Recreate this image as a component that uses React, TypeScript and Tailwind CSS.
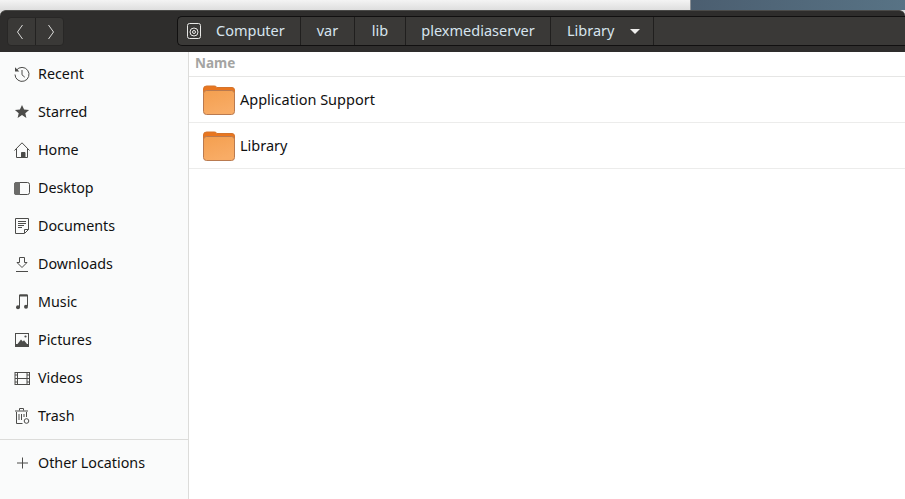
import type { ReactNode } from 'react';

const sans = 'font-["Noto_Sans",sans-serif]';

function Icon({ children }: { children: ReactNode }) {
  return (
    <svg width="16" height="16" viewBox="0 0 16 16" fill="none" stroke="#4c4c4a" strokeWidth="1" className="shrink-0">
      {children}
    </svg>
  );
}

const places: { label: string; icon: ReactNode }[] = [
  {
    label: 'Recent',
    icon: (
      <>
        <path d="M2.4 4.2A7 7 0 1 1 1 8.5" />
        <path d="M1 1.2v4.3h4.3z" fill="#4c4c4a" stroke="none" />
        <path d="M8 4v4.8l2.8 2.4" />
      </>
    ),
  },
  {
    label: 'Starred',
    icon: <path d="M8 1l2.1 4.5 5 .5-3.8 3.2 1.1 4.9L8 11.1l-4.4 3 1.1-4.9L.9 6l5-.5z" fill="#4c4c4a" stroke="none" />,
  },
  {
    label: 'Home',
    icon: (
      <>
        <path d="M.5 8.5L8 .8l7.5 7.7" />
        <path d="M2.5 7v8.5h11V7" />
        <path d="M7.5 15.5v-5h3.5v5z" fill="#4c4c4a" />
      </>
    ),
  },
  {
    label: 'Desktop',
    icon: (
      <>
        <rect x=".5" y="2.5" width="15" height="12" rx="2" />
        <path d="M2.5 2H6v13H2.5A2.5 2.5 0 0 1 0 12.5v-8A2.5 2.5 0 0 1 2.5 2z" fill="#6b6b69" stroke="none" />
      </>
    ),
  },
  {
    label: 'Documents',
    icon: (
      <>
        <path d="M1.5 .5h13v11l-4 4h-9z" />
        <path d="M10.5 15v-3.5H14.5" />
        <path d="M4 3.5h8M4 5.5h8M4 7.5h6M4 9.5h4" />
      </>
    ),
  },
  {
    label: 'Downloads',
    icon: (
      <>
        <path d="M5.5 1.5h5v5h2.5L8 11.5 3 6.5h2.5z" />
        <path d="M2 15.5h12" />
      </>
    ),
  },
  {
    label: 'Music',
    icon: (
      <>
        <path d="M5.5 13V1h8v11" />
        <path d="M5.5 1.5h8" strokeWidth="2" />
        <circle cx="4" cy="13.2" r="2" fill="#4c4c4a" stroke="none" />
        <circle cx="12" cy="12.7" r="2" fill="#4c4c4a" stroke="none" />
      </>
    ),
  },
  {
    label: 'Pictures',
    icon: (
      <>
        <rect x="1.5" y="1.5" width="13" height="13" />
        <path d="M1 12h14v3H1z" fill="#4c4c4a" stroke="none" />
        <path d="M3.5 12L7 7.5l1.8 2L10 8.3 13 12z" fill="#4c4c4a" stroke="none" />
        <circle cx="11.5" cy="4.5" r="1.1" fill="#4c4c4a" stroke="none" />
      </>
    ),
  },
  {
    label: 'Videos',
    icon: (
      <>
        <rect x="1" y="2.5" width="14.5" height="12" />
        <path d="M3.5 2.5v12M13 2.5v12M3.5 8.5h9.5" />
        <path d="M1 5h2.5M1 8.5h2.5M1 12h2.5M13 5h2.5M13 8.5h2.5M13 12h2.5" />
      </>
    ),
  },
  {
    label: 'Trash',
    icon: (
      <>
        <path d="M2.5 4v11.5h6M12.5 4v5" />
        <path d="M1 3h13M5.5 2.5V.5h4v2" />
        <path d="M5 6v6M7.5 6v6M10 6v3" />
        <circle cx="12.5" cy="13" r="2.3" />
      </>
    ),
  },
];

function Crumb({ width, children }: { width: string; children: ReactNode }) {
  return <div className={`flex items-center justify-center h-full border-r border-[#201f1e] ${width}`}>{children}</div>;
}

function Row({ label }: { label: string }) {
  return (
    <div className="h-[46px] flex items-center pl-[14px] border-b border-[#ececeb]">
      <svg width="32" height="32" viewBox="0 0 32 32" className="shrink-0">
        <defs>
          <linearGradient id="folderFront" x1="0" y1="0" x2="0.4" y2="1">
            <stop offset="0" stopColor="#f49f4f" />
            <stop offset="1" stopColor="#f8ac66" />
          </linearGradient>
        </defs>
        <path d="M.5 5a3 3 0 0 1 3-3h8a3 3 0 0 1 2.5 1.5h15A2.5 2.5 0 0 1 31.5 6v8H.5z" fill="#e9761f" stroke="#d4742c" strokeWidth="1" />
        <rect x=".5" y="6.5" width="31" height="24" rx="3" fill="url(#folderFront)" stroke="#b97a50" strokeWidth="1" />
      </svg>
      <span className={`ml-[5px] text-[14.5px] text-[#111] ${sans}`}>{label}</span>
    </div>
  );
}

export default function App() {
  return (
    <div className={`w-[905px] h-[499px] overflow-hidden flex flex-col bg-white ${sans}`}>
      <div className="shrink-0 bg-[#dddddd]">
        {/* desktop behind the window */}
        <div className="h-[10px] flex">
          <div className="w-[691px] bg-gradient-to-b from-[#f4f4f4] to-[#dedede] border-r border-[#8a8f94]" />
          <div className="flex-1 bg-gradient-to-r from-[#4b5e70] to-[#587385]" />
        </div>

        {/* header bar */}
        <div className="h-[42px] bg-[#2e2d2c] rounded-t-[6px] flex items-start pt-[5px] pl-[7px] border-t border-[#4a4a48]">
          <div className="mt-[1px] flex h-[29px] w-[57px] rounded-[4px] bg-[#3a3937] border border-[#282726]">
            <div className="flex-1 flex items-center justify-center pr-[3px] border-r border-[#232221]">
              <svg width="8" height="16" viewBox="0 0 8 16" fill="none" stroke="#dcdcda" strokeWidth="1">
                <path d="M6.5 1L1.5 8l5 7" />
              </svg>
            </div>
            <div className="flex-1 flex items-center justify-center pl-[3px]">
              <svg width="8" height="16" viewBox="0 0 8 16" fill="none" stroke="#dcdcda" strokeWidth="1">
                <path d="M1.5 1l5 7-5 7" />
              </svg>
            </div>
          </div>

          <div className="ml-[113px] flex-1 h-[30px] flex items-center bg-[#3a3937] border border-r-0 border-[#111010] rounded-l-[5px] text-[14.5px] text-[#d6e4ee]">
            <div className="flex items-center h-full w-[123px] pl-[9px] gap-[15px] border-r border-[#201f1e]">
              <svg width="14" height="16" viewBox="0 0 14 16" fill="none" stroke="#e8e8e6" strokeWidth="1">
                <rect x=".5" y=".5" width="13" height="15" rx="2" />
                <circle cx="7" cy="9" r="4" />
                <circle cx="7" cy="9" r="1.5" />
              </svg>
              <span>Computer</span>
            </div>
            <Crumb width="w-[54px]">var</Crumb>
            <Crumb width="w-[51px]">lib</Crumb>
            <Crumb width="w-[145px]">plexmediaserver</Crumb>
            <Crumb width="w-[103px] gap-[16px] !justify-start pl-[16px]">
              <span>Library</span>
              <span className="w-0 h-0 border-x-[5px] border-x-transparent border-t-[5px] border-t-[#eeeeec]" />
            </Crumb>
          </div>
        </div>
      </div>

      <div className="flex flex-1 min-h-0">
        {/* sidebar */}
        <aside className="w-[189px] shrink-0 bg-[#fafbfb] border-r border-[#dcdcda] pt-[3px]">
          {places.map(p => (
            <div key={p.label} className="h-[38px] flex items-center pl-[14px] gap-[8px] text-[14.3px] text-[#111]">
              <Icon>{p.icon}</Icon>
              <span>{p.label}</span>
            </div>
          ))}
          <div className="mt-[4px] border-t border-[#dcdcda] h-[46px] flex items-center pl-[14px] gap-[8px] text-[14.3px] text-[#111]">
            <Icon>
              <path d="M8.5 2.5v11M3 8h11" />
            </Icon>
            <span>Other Locations</span>
          </div>
        </aside>

        {/* file list */}
        <main className="flex-1 min-w-0">
          <div className="h-[25px] flex items-center pl-[6px] pb-[1px] border-b border-[#e6e6e5] text-[13.5px] font-bold text-[#a4a4a2]">
            Name
          </div>
          <Row label="Application Support" />
          <Row label="Library" />
        </main>
      </div>
    </div>
  );
}
